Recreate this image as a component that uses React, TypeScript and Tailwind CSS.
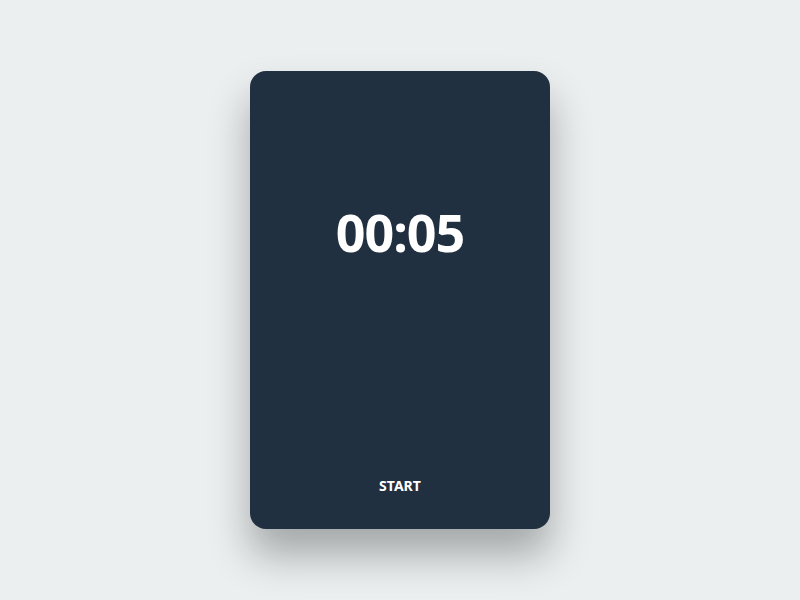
import React from 'react';

export default function App() {
  return (
    <div className="flex h-screen w-full items-center justify-center bg-[#ebeff0]" style={{ fontFamily: '"Noto Sans", "Open Sans", sans-serif' }}>
      <div className="flex h-[458px] w-[300px] flex-col items-center justify-between rounded-[16px] bg-[#213040] pt-[124px] pb-[30px] shadow-[0_26px_40px_rgba(0,0,0,0.3)]">
        <div className="text-[52px] font-bold leading-[74px] tracking-[-1px] text-white">00:05</div>
        <button className="text-[14px] font-bold leading-[26px] text-white">START</button>
      </div>
    </div>
  );
}
